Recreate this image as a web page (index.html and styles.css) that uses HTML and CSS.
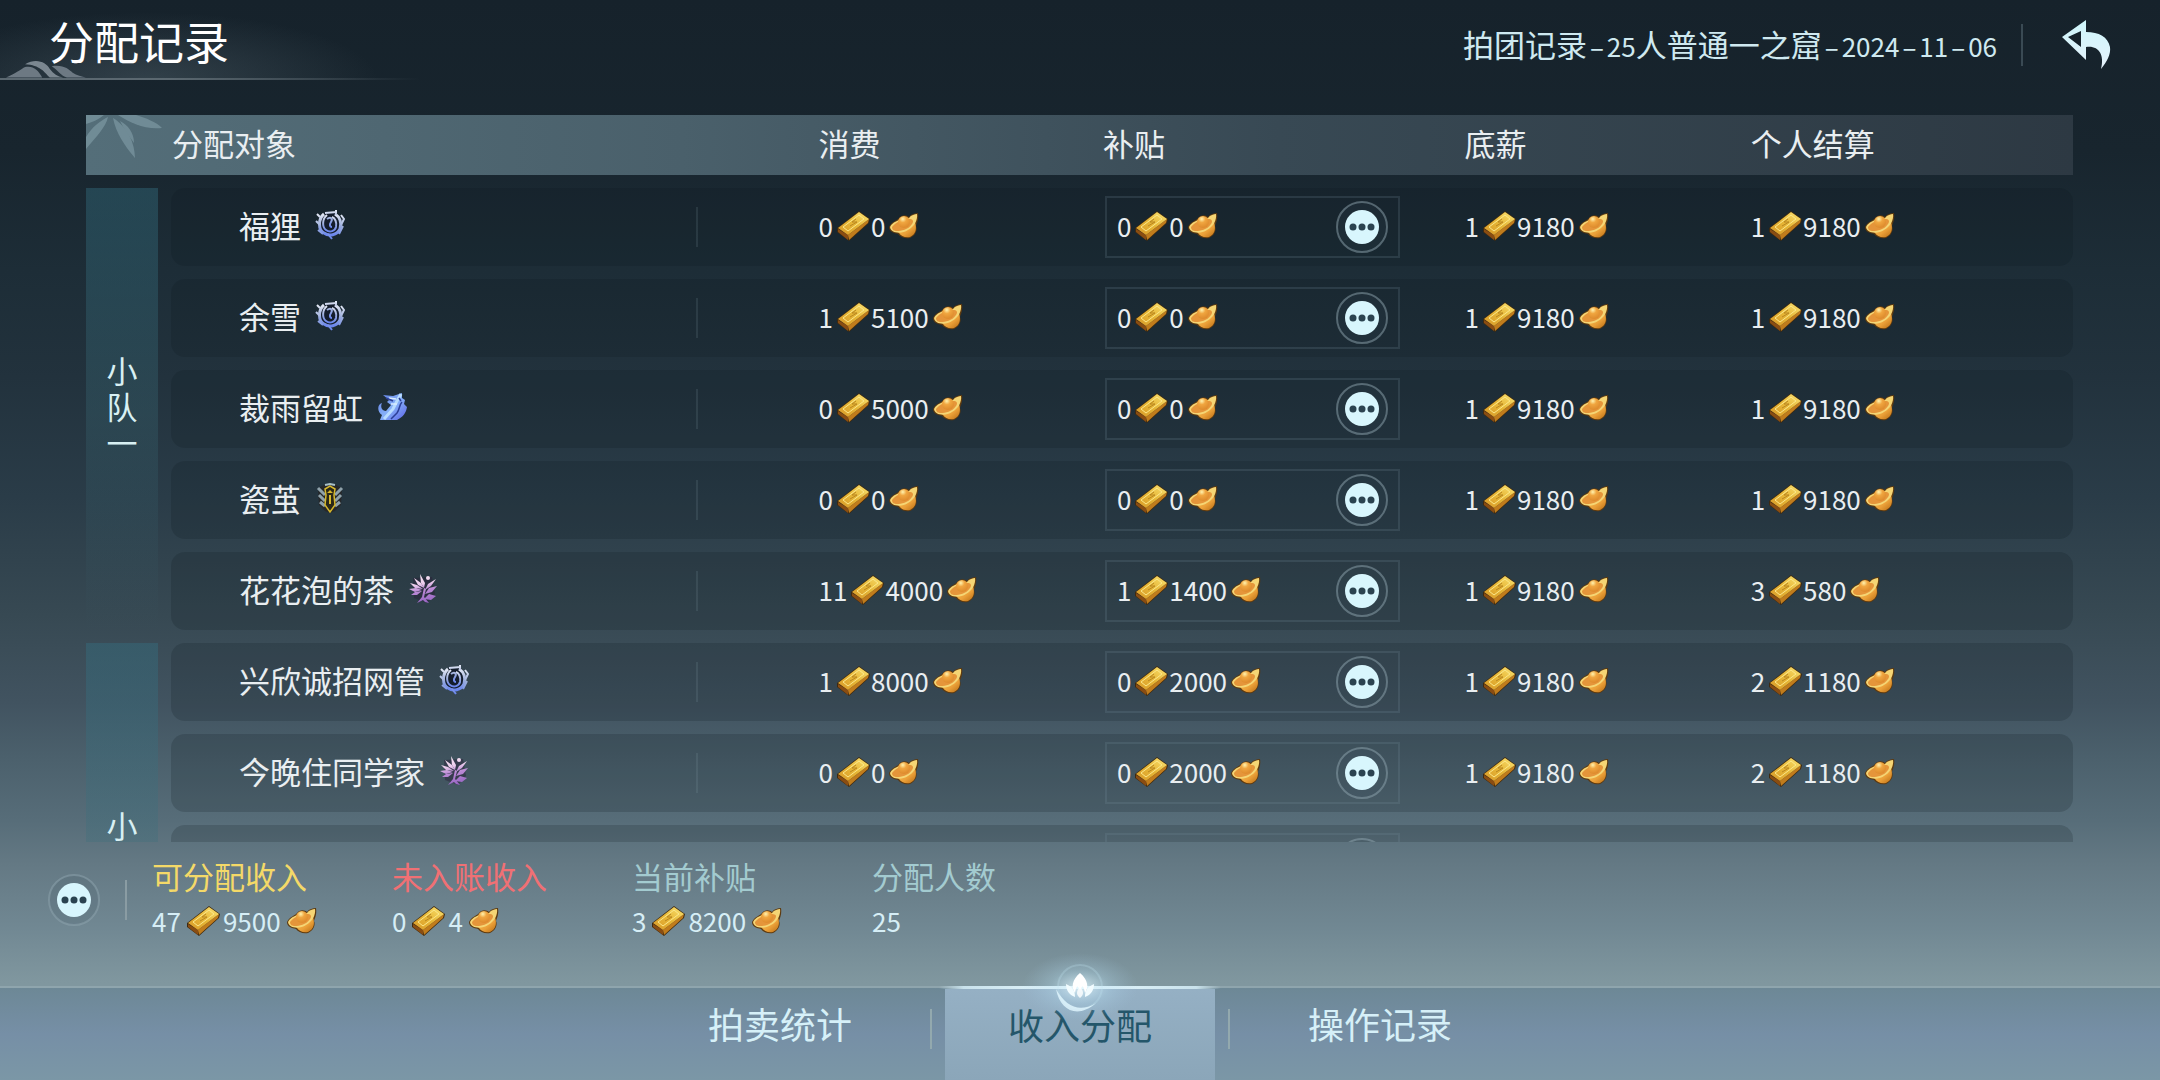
FILE: index.html
```
<!DOCTYPE html>
<html lang="zh-CN">

<head>
    <meta charset="UTF-8">
    <meta name="viewport" content="width=device-width, initial-scale=1.0">
    <title>分配记录</title>
    <link rel="stylesheet" href="styles.css">
</head>

<body>
    <svg class="defs" aria-hidden="true">
        <defs>
            <linearGradient id="brickTop" x1="0" y1="1" x2="1" y2="0">
                <stop offset="0" stop-color="#d99a2a" />
                <stop offset="0.5" stop-color="#e6b636" />
                <stop offset="1" stop-color="#fbe374" />
            </linearGradient>
            <linearGradient id="ingotBody" x1="0" y1="0" x2="1" y2="1">
                <stop offset="0" stop-color="#f7c95c" />
                <stop offset="0.6" stop-color="#eba038" />
                <stop offset="1" stop-color="#b96d14" />
            </linearGradient>
            <radialGradient id="ingotBall" cx="0.4" cy="0.25" r="0.75">
                <stop offset="0" stop-color="#fff3ae" />
                <stop offset="0.4" stop-color="#f0a640" />
                <stop offset="1" stop-color="#dd8a2c" />
            </radialGradient>
            <linearGradient id="swirl" x1="0" y1="0" x2="0" y2="1">
                <stop offset="0" stop-color="#e4e9f5" />
                <stop offset="0.5" stop-color="#9fb0dc" />
                <stop offset="1" stop-color="#6a86ee" />
            </linearGradient>
            <linearGradient id="wave" x1="0" y1="0" x2="1" y2="1">
                <stop offset="0" stop-color="#5a78e0" />
                <stop offset="0.5" stop-color="#86b0f8" />
                <stop offset="1" stop-color="#5a62e6" />
            </linearGradient>
            <linearGradient id="flower" gradientUnits="userSpaceOnUse" x1="0" y1="0" x2="6" y2="30">
                <stop offset="0" stop-color="#fdf0f6" />
                <stop offset="0.4" stop-color="#eccdec" />
                <stop offset="0.6" stop-color="#bd8cd6" />
                <stop offset="1" stop-color="#9a68c4" />
            </linearGradient>
            <linearGradient id="backArrow" x1="0" y1="0" x2="0" y2="1">
                <stop offset="0" stop-color="#cdf6fb" />
                <stop offset="1" stop-color="#e6f1fb" />
            </linearGradient>
            <radialGradient id="glow">
                <stop offset="0" stop-color="#e8faff" stop-opacity="0.8" />
                <stop offset="0.5" stop-color="#b4dcf0" stop-opacity="0.3" />
                <stop offset="1" stop-color="#a4c8e0" stop-opacity="0" />
            </radialGradient>
        </defs>

        <symbol id="brick" viewBox="0 0 33 30">
            <path d="M22 0 L33 8 L32 12 L12 30 L0 21 L0 17 Z" fill="#3f2a10" />
            <path d="M1 18 L11 24 L11 29 L1 21 Z" fill="#8a4d12" />
            <path d="M11 24 L32 8 L31 12 L12 29 Z" fill="#c07c1c" />
            <path d="M22 1 L32 8 L11 24 L1 17 Z" fill="url(#brickTop)" />
            <path d="M22 4 L27 8 L11 20 L6 16 Z" fill="none" stroke="#fbe88a" stroke-width="1" />
            <path d="M19 8 L15 11 L20 11 L13 15" fill="none" stroke="#b98620" stroke-width="1" />
        </symbol>

        <symbol id="ingot" viewBox="0 0 30 26">
            <path d="M0 14 C3 8 8 8 10 5 C13 1 18 2 20 4 C22 1 26 0 29 0 C30 6 28 10 27 13 C29 17 26 23 21 25 C16 26 11 24 9 21 C5 20 0 19 0 14 Z" fill="#5d3a10" />
            <path d="M8 16 C14 17 22 13 26 9 C28 16 27 21 21 24 C16 25 12 23 10 20 Z" fill="url(#ingotBody)" />
            <path d="M1 14 C4 8 9 9 12 5 C16 4 18 5 20 5 C22 2 26 1 28 1 C29 7 25 14 19 17 C13 21 2 21 1 14 Z" fill="#f5d574" />
            <path d="M3 14 C7 9 12 7 20 6 C24 6 25 8 23 11 C19 17 12 18 8 18 C5 18 3 17 3 14 Z" fill="#e5953a" />
            <ellipse cx="15" cy="9" rx="6" ry="6" fill="url(#ingotBall)" />
        </symbol>

        <symbol id="dots" viewBox="0 0 52 52">
            <circle cx="26" cy="26" r="25" fill="rgba(60,80,92,0.15)" stroke="#8fa5b0" stroke-opacity="0.5" stroke-width="2" />
            <circle cx="26" cy="26" r="17" fill="#d8f6fd" />
            <circle cx="17" cy="26" r="3.500" fill="#2b4350" />
            <circle cx="26" cy="26" r="3.500" fill="#2b4350" />
            <circle cx="35" cy="26" r="3.500" fill="#2b4350" />
        </symbol>

        <symbol id="job-swirl" viewBox="0 0 30 30">
            <circle cx="15" cy="14" r="12" fill="#141d2c" />
            <g fill="none" stroke="url(#swirl)">
                <path d="M9 4 C3 9 3 20 9 23 C14 27 22 25 25 19 C27 13 25 7 20 4" stroke-width="3" />
                <path d="M12 5 C7 9 7 17 11 20 C15 23 20 21 21 17 C22 12 20 8 17 7" stroke-width="2" />
                <path d="M10 3 L22 2 M21 0 V5 M12 9 C16 6 18 9 16 12 C14 15 15 17 17 17" stroke-width="2" />
                <path d="M2 4 L5 7 M1 11 L5 15 M3 20 L8 24 M13 24 L17 29 M26 5 L29 9 L26 15 M28 16 L24 24" stroke-width="2" />
            </g>
        </symbol>

        <symbol id="job-wave" viewBox="0 0 30 30">
            <path d="M6 3 L16 4 L25 1 L25 6 L28 8 L27 12 L30 15 C29 21 26 25 20 28 L3 28 L5 23 C0 20 0 12 5 11 C3 15 5 19 9 19 L14 13 L10 10 L12 8 Z" fill="url(#wave)" />
            <path d="M24 2 L20 9 L16 17 L7 27" fill="none" stroke="#b8dcff" stroke-width="3" />
            <path d="M12 6 L19 7 M14 12 L20 12" fill="none" stroke="#d8ecff" stroke-width="1.500" />
            <path d="M25 10 C22 13 23 17 20 21 L14 27 M9 6 L16 9 M22 6 L24 9" fill="none" stroke="#2c3f96" stroke-width="1.500" />
        </symbol>

        <symbol id="job-shield" viewBox="0 0 30 30">
            <path d="M9 2 L15 0 L21 2 L27 5 L26 22 L20 28 L15 30 L10 28 L4 22 L3 5 Z" fill="#26282a" />
            <path d="M3 5 L10 12 M4 12 L10 18 M5 19 L10 23 M27 5 L20 12 M26 12 L20 18 M25 19 L20 23" stroke="#8fa2ab" stroke-width="3" />
            <path d="M10 2 L15 1 L20 2" fill="none" stroke="#a8c0c8" stroke-width="2" />
            <path d="M10 6 L15 3 L20 6 L19 12 L20 22 L15 29 L10 22 L11 12 Z" fill="#2a2818" stroke="#d6b72c" stroke-width="1.500" />
            <path d="M15 7 L12 10 H18 Z M14 12 H16 V21 H14 Z" fill="#d6b72c" />
        </symbol>

        <symbol id="job-flower" viewBox="0 0 30 30">
            <path d="M5 4 L24 3 L27 20 L19 29 L6 24 Z" fill="#2a1c38" opacity="0.45" />
            <g fill="url(#flower)">
                <path d="M12 0 L17 9 L16 14 L13 9 Z" />
                <path d="M6 4 L13 9 L16 14 L10 11 Z" />
                <path d="M2 9 L9 11 L15 15 L7 14 Z" />
                <path d="M1 15 L8 14 L14 16 L7 18 Z" />
                <path d="M3 21 L7 18 L14 17 L9 21 Z" />
                <path d="M28 5 L23 12 L17 16 L20 10 Z" />
                <path d="M29 12 L24 18 L17 20 L21 14 Z" />
                <path d="M28 22 L23 26 L16 25 L21 20 Z" />
                <path d="M16 14 L18 15 L16 23 L21 29 L17 28 L15 26 L9 29 L14 23 Z" />
                <circle cx="20" cy="4" r="2" />
            </g>
        </symbol>
    </svg>

    <header class="topbar">
        <div class="title-box">
            <svg class="hills" viewBox="0 0 84 18" aria-hidden="true">
                <path d="M0 18 C10 14 16 9 20 7 C28 5 34 10 38 18 Z" fill="#6d7983" />
                <path d="M20 4 C32 -3 42 2 46 9 C50 14 54 17 60 18 H46 C40 12 36 5 20 4 Z" fill="#7b8790" />
                <path d="M48 6 C60 4 66 9 70 13 C74 16 80 17 84 18 H64 C58 16 54 10 48 6 Z" fill="#6d7983" />
            </svg>
            <h1>分配记录</h1>
        </div>
        <div class="top-right">
            <h2>拍团记录<span class="dash">–</span><span class="num">25</span>人普通一之窟<span class="dash">–</span><span class="num">2024</span><span class="dash">–</span><span class="num">11</span><span class="dash">–</span><span class="num">06</span></h2>
            <button class="back" type="button" aria-label="返回">
                <svg width="50" height="50" viewBox="0 0 50 50">
                    <path d="M25 0 L1 17 L25 40 L25 27 C37 25 44 34 40 49 C46 42 50 34 49 27 C47 17 38 12 25 12 Z M20 11 V27 L7 17 Z" fill="url(#backArrow)" fill-rule="evenodd" />
                </svg>
            </button>
        </div>
    </header>

    <main class="table-wrap">
        <table>
            <colgroup>
                <col class="col-group">
                <col class="col-name">
                <col class="col-spend">
                <col class="col-subsidy">
                <col class="col-base">
                <col class="col-total">
            </colgroup>
            <thead>
                <tr>
                    <th class="th-name" colspan="2">
                        <svg class="leaves" viewBox="0 0 76 44" aria-hidden="true">
                            <g fill="#84a0aa" opacity="0.6">
                                <path d="M22 2 C20 12 10 22 0 34 V22 C6 12 14 6 22 2 Z" />
                                <path d="M0 0 H18 C12 5 6 7 0 9 Z" />
                                <path d="M27 3 C38 10 48 22 49 43 C38 30 30 18 27 3 Z" />
                                <path d="M34 6 C42 10 48 18 48 28 C42 20 38 14 34 6 Z" />
                                <path d="M32 0 H50 C60 3 70 7 76 13 C60 15 44 8 32 0 Z" />
                            </g>
                        </svg>
                        分配对象
                    </th>
                    <th class="th-spend">消费</th>
                    <th>补贴</th>
                    <th>底薪</th>
                    <th>个人结算</th>
                </tr>
            </thead>
            <tbody id="rows"></tbody>
        </table>
    </main>

    <footer class="summary">
        <button class="dots" type="button" aria-label="更多"><svg><use href="#dots" /></svg></button>
        <dl class="stats" id="stats"></dl>
    </footer>

    <nav class="tabs">
        <button type="button">拍卖统计</button>
        <button type="button" class="active">
            <svg class="lotus" viewBox="0 0 120 80" aria-hidden="true">
                <ellipse cx="60" cy="42" rx="58" ry="34" fill="url(#glow)" />
                <circle cx="60" cy="42" r="22" fill="none" stroke="#c4e6f2" stroke-opacity="0.25" stroke-width="2" />
                <path d="M36 44 C40 66 58 74 76 58 C60 68 46 62 36 44 Z" fill="#e2f8ff" opacity="0.8" />
                <path d="M60 28 C68 35 69 42 65 48 C64 42 62 39 60 38 C58 39 56 42 55 48 C51 42 52 35 60 28 Z" fill="#fff" />
                <path d="M60 30 L66 38 L60 44 L54 38 Z" fill="#fff" />
                <path d="M60 42 C64 46 64 50 60 53 C56 50 56 46 60 42 Z" fill="#fff" opacity="0.8" />
                <path d="M46 39 C53 42 55 46 55 52 C49 50 46 45 46 39 Z M74 39 C67 42 65 46 65 52 C71 50 74 45 74 39 Z" fill="#f2fcff" />
            </svg>
            收入分配
        </button>
        <button type="button">操作记录</button>
    </nav>

    <script>
    var teams = [
        {
            label: '小队一',
            members: [
                { name: '福狸', job: 'swirl', spend: [0, 0], subsidy: [0, 0], base: [1, 9180], total: [1, 9180] },
                { name: '余雪', job: 'swirl', spend: [1, 5100], subsidy: [0, 0], base: [1, 9180], total: [1, 9180] },
                { name: '裁雨留虹', job: 'wave', spend: [0, 5000], subsidy: [0, 0], base: [1, 9180], total: [1, 9180] },
                { name: '瓷茧', job: 'shield', spend: [0, 0], subsidy: [0, 0], base: [1, 9180], total: [1, 9180] },
                { name: '花花泡的茶', job: 'flower', spend: [11, 4000], subsidy: [1, 1400], base: [1, 9180], total: [3, 580] }
            ]
        },
        {
            label: '小队二',
            members: [
                { name: '兴欣诚招网管', job: 'swirl', spend: [1, 8000], subsidy: [0, 2000], base: [1, 9180], total: [2, 1180] },
                { name: '今晚住同学家', job: 'flower', spend: [0, 0], subsidy: [0, 2000], base: [1, 9180], total: [2, 1180] },
                {}, {}, {}
            ]
        }
    ];

    var stats = [
        { label: '可分配收入', cls: 'gold', coins: [47, 9500] },
        { label: '未入账收入', cls: 'red', coins: [0, 4] },
        { label: '当前补贴', cls: '', coins: [3, 8200] },
        { label: '分配人数', cls: '', count: 25 }
    ];

    // [bricks, ingots]
    function money(coins) {
        if (!coins) return '';
        return '<span class="money">' + coins[0] +
            '<svg class="brick"><use href="#brick"/></svg>' + coins[1] +
            '<svg class="ingot"><use href="#ingot"/></svg></span>';
    }

    var html = '';
    teams.forEach(team => {
        team.members.forEach((m, i) => {
            html += '<tr>';
            if (i === 0) {
                html += '<th class="team" scope="rowgroup" rowspan="' + team.members.length + '">' +
                    '<span>' + team.label + '</span></th>';
            }
            html += '<td class="name">' + (m.name ? '<div>' + m.name + '<svg><use href="#job-' + m.job + '"/></svg></div>' : '') + '</td>' +
                '<td class="spend">' + money(m.spend) + '</td>' +
                '<td><div class="subsidy">' + money(m.subsidy) +
                '<button class="dots" type="button" aria-label="编辑补贴"><svg><use href="#dots"/></svg></button></div></td>' +
                '<td>' + money(m.base) + '</td>' +
                '<td class="total">' + money(m.total) + '</td></tr>';
        });
    });
    document.getElementById('rows').innerHTML = html;

    document.getElementById('stats').innerHTML = stats.map(s =>
        '<div><dt class="' + s.cls + '">' + s.label + '</dt><dd>' +
        (s.coins ? money(s.coins) : s.count) + '</dd></div>'
    ).join('');
    </script>
</body>

</html>
```
FILE: styles.css
```
* {
    box-sizing: border-box;
}

body {
    font-family: "Noto Sans CJK SC", sans-serif;
    margin: 0;
    height: 100vh;
    display: flex;
    flex-direction: column;
    overflow: hidden;
    color: #e9eef1;
    background: linear-gradient(#16222b 0%, #18252e 14%, #1d2d37 25%, #22323d 35%, #2a3c48 46%, #374953 57%, #415360 65%, #4b606c 70%, #576d79 76%, #647984 80%, #718893 86%, #80979f 91%);
}

h1,
h2,
dl,
dd {
    margin: 0;
    font-weight: 400;
}

button {
    padding: 0;
    border: none;
    background: none;
    color: inherit;
    font: inherit;
    cursor: pointer;
}

svg {
    display: block;
}

.defs {
    position: absolute;
    width: 0;
    height: 0;
}

/* top bar */
.topbar {
    display: flex;
    justify-content: space-between;
    flex: none;
    height: 80px;
}

.title-box {
    position: relative;
    width: 420px;
    padding-left: 49px;
    background:
        linear-gradient(90deg, #5b6870, #5b6870 40%, transparent) bottom / 100% 2px no-repeat,
        radial-gradient(ellipse at 35% 100%, rgba(120, 140, 150, 0.28), transparent 60%);
}

.title-box h1 {
    position: relative;
    font-size: 45px;
    line-height: 82px;
    color: #fff;
}

.hills {
    position: absolute;
    left: 6px;
    bottom: 2px;
    width: 80px;
    height: 18px;
}

.top-right {
    display: flex;
    align-items: center;
    padding: 10px 49px 0 0;
}

.top-right h2 {
    font-size: 31px;
    line-height: 40px;
    padding-right: 24px;
    color: #cfe9f0;
    border-right: 2px solid #3a4a54;
}

.num,
.dash {
    font-size: 26px;
}

.dash {
    padding: 0 3px;
}

.back {
    margin-left: 38px;
}

/* table */
.table-wrap {
    flex: 1 1 0;
    min-height: 0;
    margin: 22px 87px 0 86px;
    overflow: hidden;
}

table {
    width: 100%;
    border-spacing: 0 13px;
    margin-top: -13px;
    table-layout: fixed;
}

.table-wrap {
    padding-top: 13px;
}

.col-group {
    width: 85px;
}

.col-name {
    width: 26.5%;
}

.col-spend {
    width: 20.4%;
}

.col-subsidy {
    width: 18.2%;
}

.col-base {
    width: 14.4%;
}

th,
td {
    padding: 0;
    text-align: left;
    font-weight: 400;
}

thead th {
    height: 60px;
    padding-bottom: 4px;
    font-size: 31px;
    line-height: 40px;
}

thead tr {
    background: linear-gradient(90deg, #546e79, #4a606b 30%, #384954 60%, #2d3943);
}

.th-name {
    position: relative;
    padding-left: 86px;
}

.leaves {
    position: absolute;
    left: 0;
    top: 0;
    width: 76px;
    height: 44px;
}

.th-spend,
.spend {
    padding-left: 121px;
}

td {
    height: 78px;
    background: rgba(12, 24, 30, 0.18);
}

.team {
    padding: 0 13px 6px 0;
    background: linear-gradient(rgba(52, 112, 130, 0.42), rgba(60, 110, 122, 0.3) 50%, transparent) 0 0 / 72px 100% no-repeat;
}

.team span {
    display: block;
    width: 31px;
    margin: 0 auto;
    font-size: 31px;
    line-height: 36px;
    word-break: break-all;
    color: #d8f0f3;
}

.name {
    padding-left: 68px;
    border-radius: 14px 0 0 14px;
    background: linear-gradient(rgba(140, 165, 175, 0.15), rgba(140, 165, 175, 0.15)) right / 2px 40px no-repeat, rgba(12, 24, 30, 0.18);
}

.name div {
    display: flex;
    align-items: center;
    gap: 14px;
    padding-bottom: 4px;
    font-size: 31px;
    line-height: 40px;
}

.name svg {
    width: 30px;
    height: 30px;
}

.total {
    border-radius: 0 14px 14px 0;
}

.money {
    display: flex;
    align-items: center;
    gap: 4px;
    padding-bottom: 2px;
    font-size: 26px;
    line-height: 40px;
}

.brick {
    width: 33px;
    height: 30px;
    margin-right: -3px;
}

.ingot {
    width: 30px;
    height: 26px;
}

.subsidy {
    display: flex;
    align-items: center;
    width: 295px;
    height: 62px;
    margin-left: 2px;
    padding: 0 10px;
    border: 2px solid rgba(120, 145, 158, 0.2);
}

.dots {
    width: 52px;
    height: 52px;
}

.subsidy .dots {
    margin-left: auto;
}

.dots svg {
    width: 52px;
    height: 52px;
}

/* totals */
.summary {
    display: flex;
    flex: none;
    height: 144px;
    padding: 14px 48px 0;
}

.summary > .dots {
    margin-top: 18px;
}

.stats {
    display: flex;
    margin-left: 25px;
    padding-left: 27px;
    background: linear-gradient(#8a9ca3, #8a9ca3) 0 24px / 2px 40px no-repeat;
}

.stats div {
    width: 240px;
}

.stats dt {
    font-size: 31px;
    line-height: 40px;
    color: #a3cbd0;
}

.stats .gold {
    color: #f4d968;
}

.stats .red {
    color: #f07074;
}

.stats dd {
    padding-top: 5px;
    font-size: 26px;
    line-height: 40px;
    color: #d6eef6;
}

.stats .money {
    gap: 6px;
}

/* tabs */
.tabs {
    display: flex;
    justify-content: center;
    flex: none;
    height: 94px;
    border-top: 2px solid #8fa5ad;
    background: linear-gradient(#6d8896, #768fa6 50%, #7b97a6);
}

.tabs button {
    width: 300px;
    padding-bottom: 22px;
    font-size: 36px;
    line-height: 44px;
    color: #d6f0f8;
}

.tabs .active {
    position: relative;
    margin-top: -2px;
    border-top: 3px solid #c9e2ec;
    color: #24566a;
    background:
        linear-gradient(#93a9ae, #93a9ae) 0 20px / 2px 40px no-repeat,
        linear-gradient(#93a9ae, #93a9ae) right 20px / 2px 40px no-repeat,
        linear-gradient(#95b0c4, #8ba6b9) center / 270px 100% no-repeat;
    border-image: linear-gradient(90deg, transparent 4%, #c9e2ec 12%, #e8faff 50%, #c9e2ec 88%, transparent 96%) 3;
}

.lotus {
    position: absolute;
    left: 50%;
    top: -44px;
    width: 120px;
    height: 80px;
    margin-left: -60px;
}
```
